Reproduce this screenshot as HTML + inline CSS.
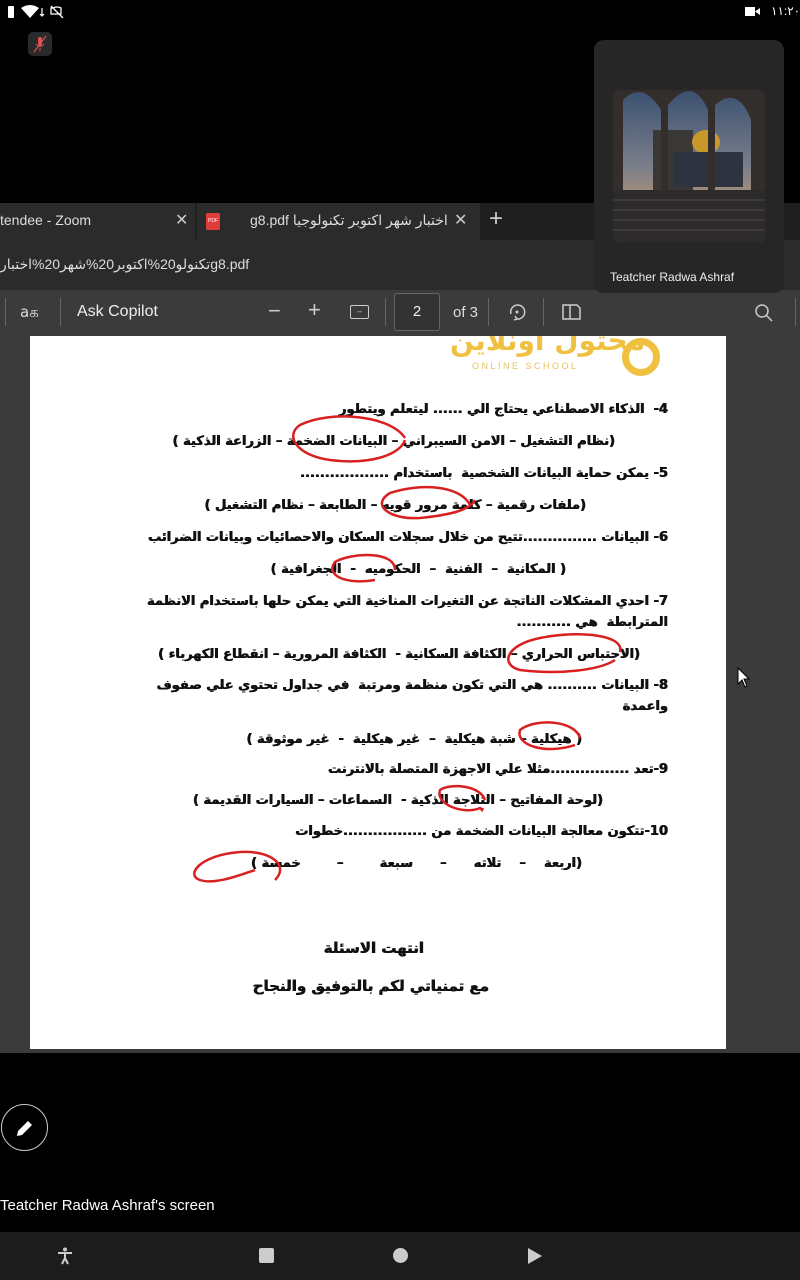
<!DOCTYPE html>
<html><head><meta charset="utf-8"><style>
*{margin:0;padding:0;box-sizing:border-box}
body{width:800px;height:1280px;background:#000;position:relative;overflow:hidden;font-family:"Liberation Sans",sans-serif;color:#ddd}
.a{position:absolute}
.ar{position:absolute;direction:rtl;white-space:nowrap;font-family:"DejaVu Sans","Liberation Sans",sans-serif;font-weight:bold;font-size:13px;color:#111;line-height:20px;text-shadow:0.4px 0 0 #111,-0.3px 0 0 #111}
</style></head><body>
<!-- status bar -->
<div class="a" style="left:8px;top:6px;width:6px;height:12px;background:#fff;border-radius:1px"></div>
<svg class="a" style="left:20px;top:5px" width="48" height="14"><path d="M1 3 Q10 -3 19 3 L10 13 Z" fill="#fff"/><path d="M22 3v8M20 9l2 2 2-2" stroke="#fff" stroke-width="1.2" fill="none"/><path d="M33 3 Q37 1 41 3 V9 H31 V3 Z M31 1 L43 13" stroke="#fff" stroke-width="1.3" fill="none"/></svg>
<div class="a" style="left:745px;top:7px;width:10px;height:9px;background:#fff"></div>
<div class="a" style="left:755px;top:8px;width:5px;height:7px;background:#fff;clip-path:polygon(0 50%,100% 0,100% 100%)"></div>
<div class="a" style="left:771px;top:4px;font-size:12px;color:#fff">١١:٢٠</div>
<div class="a" style="left:28px;top:32px;width:24px;height:24px;background:#2a2a2a;border-radius:5px"></div>
<svg class="a" style="left:28px;top:32px" width="24" height="24"><rect x="10" y="5" width="4" height="9" rx="2" fill="#e05050"/><path d="M8 12 q4 5 8 0 M12 16v3" stroke="#e05050" fill="none"/><path d="M6 20 L18 4" stroke="#e05050" stroke-width="1.2"/></svg>

<!-- browser -->
<div class="a" style="left:0;top:203px;width:800px;height:37px;background:#1f1f1f"></div>
<div class="a" style="left:0;top:203px;width:195px;height:37px;background:#2b2b2b"></div>
<div class="a" style="left:0;top:212px;font-size:14px;color:#ddd">tendee - Zoom</div>
<div class="a" style="left:175px;top:210px;font-size:16px;color:#ccc">✕</div>
<div class="a" style="left:197px;top:203px;width:283px;height:37px;background:#2b2b2b"></div>
<div class="a" style="left:206px;top:213px;width:14px;height:17px;background:#e03c3c;border-radius:2px;font-size:5px;color:#fff;text-align:center;line-height:17px">PDF</div>
<div class="a" style="left:250px;top:212px;font-size:14px;color:#ddd;font-family:'Liberation Sans','DejaVu Sans',sans-serif">g8.pdf اختبار شهر اكتوبر تكنولوجيا</div>
<div class="a" style="left:454px;top:210px;font-size:16px;color:#ccc">✕</div>
<div class="a" style="left:489px;top:205px;font-size:24px;color:#ccc;font-weight:300">+</div>
<div class="a" style="left:0;top:240px;width:800px;height:50px;background:#2b2b2b"></div>
<div class="a" style="left:0;top:256px;font-size:14px;color:#ddd;font-family:'Liberation Sans','DejaVu Sans',sans-serif">تكنولو20%اكتوبر20%شهر20%اختبارg8.pdf</div>
<div class="a" style="left:0;top:290px;width:800px;height:46px;background:#3b3b3b"></div>
<div class="a" style="left:5px;top:298px;width:1px;height:28px;background:#666"></div>
<div class="a" style="left:20px;top:303px;font-size:15px;color:#ddd;font-family:'DejaVu Sans',sans-serif">aக</div>
<div class="a" style="left:60px;top:298px;width:1px;height:28px;background:#666"></div>
<div class="a" style="left:77px;top:303px;font-size:16px;color:#eee">Ask Copilot</div>
<div class="a" style="left:268px;top:298px;font-size:22px;color:#ccc">−</div>
<div class="a" style="left:308px;top:297px;font-size:22px;color:#ccc">+</div>
<div class="a" style="left:350px;top:305px;width:19px;height:14px;border:1.5px solid #ccc;border-radius:2px;font-size:7px;text-align:center;line-height:11px">↔</div>
<div class="a" style="left:385px;top:298px;width:1px;height:28px;background:#666"></div>
<div class="a" style="left:394px;top:293px;width:46px;height:38px;border:1px solid #666;background:#333;border-radius:3px;text-align:center;line-height:36px;font-size:15px;color:#eee">2</div>
<div class="a" style="left:453px;top:304px;font-size:15px;color:#ddd">of 3</div>
<div class="a" style="left:488px;top:298px;width:1px;height:28px;background:#666"></div>
<svg class="a" style="left:507px;top:302px" width="20" height="20"><path d="M4 12 A7 7 0 1 1 10 17" stroke="#ccc" stroke-width="1.5" fill="none"/><circle cx="10" cy="10" r="1.5" fill="#ccc"/><path d="M8 14l2 3-3 1" stroke="#ccc" fill="none" stroke-width="1.5"/></svg>
<div class="a" style="left:543px;top:298px;width:1px;height:28px;background:#666"></div>
<svg class="a" style="left:561px;top:303px" width="20" height="18"><path d="M2 2h14l3 3v11H2z M9 2v14" stroke="#ccc" stroke-width="1.5" fill="none"/></svg>
<svg class="a" style="left:754px;top:303px" width="20" height="20"><circle cx="8" cy="8" r="6" stroke="#ccc" stroke-width="1.5" fill="none"/><path d="M12.5 12.5L18 18" stroke="#ccc" stroke-width="1.5"/></svg>
<div class="a" style="left:795px;top:298px;width:1px;height:28px;background:#666"></div>
<div class="a" style="left:0;top:336px;width:800px;height:717px;background:#3b3b3b"></div>

<!-- page -->
<div class="a" style="left:30px;top:336px;width:696px;height:713px;background:#fff;overflow:hidden">
<div class="a" style="left:420px;top:-12px;font-size:28px;font-weight:bold;color:#f0c040;font-family:'DejaVu Sans',sans-serif;direction:rtl">محتول اونلاين</div>
<div class="a" style="left:442px;top:25px;font-size:9px;letter-spacing:2.5px;color:#e8c060">ONLINE SCHOOL</div>
<div class="a" style="left:592px;top:2px;width:38px;height:38px;border:7px solid #f0c040;border-radius:50%"></div>
</div>

<div class="ar" style="right:132px;top:400px">4-&nbsp; الذكاء الاصطناعي يحتاج الي ...... ليتعلم ويتطور</div>
<div class="ar" style="right:185px;top:432px">(نظام التشغيل – الامن السيبراني – البيانات الضخمة – الزراعة الذكية )</div>
<div class="ar" style="right:132px;top:464px">5- يمكن حماية البيانات الشخصية&nbsp; باستخدام ..................</div>
<div class="ar" style="right:214px;top:496px">(ملفات رقمية – كلمة مرور قويه – الطابعة – نظام التشغيل )</div>
<div class="ar" style="right:132px;top:528px">6- البيانات ...............تتيح من خلال سجلات السكان والاحصائيات وبيانات الضرائب</div>
<div class="ar" style="right:234px;top:560px">( المكانية&nbsp; –&nbsp; الفنية&nbsp; –&nbsp; الحكوميه&nbsp; -&nbsp; الجغرافية )</div>
<div class="ar" style="right:132px;top:592px">7- احدي المشكلات الناتجة عن التغيرات المناخية التي يمكن حلها باستخدام الانظمة</div>
<div class="ar" style="right:132px;top:613px">المترابطة&nbsp; هي ...........</div>
<div class="ar" style="right:160px;top:645px">(الاحتباس الحراري – الكثافة السكانية -&nbsp; الكثافة المرورية – انقطاع الكهرباء )</div>
<div class="ar" style="right:132px;top:676px">8- البيانات .......... هي التي تكون منظمة ومرتبة&nbsp; في جداول تحتوي علي صفوف</div>
<div class="ar" style="right:132px;top:697px">واعمدة</div>
<div class="ar" style="right:218px;top:730px">( هيكلية – شبة هيكلية&nbsp; –&nbsp; غير هيكلية&nbsp; -&nbsp; غير موثوقة )</div>
<div class="ar" style="right:132px;top:760px">9-تعد ................مثلا علي الاجهزة المتصلة بالانترنت</div>
<div class="ar" style="right:197px;top:791px">(لوحة المفاتيح – الثلاجة الذكية -&nbsp; السماعات – السيارات القديمة )</div>
<div class="ar" style="right:132px;top:822px">10-تتكون معالجة البيانات الضخمة من .................خطوات</div>
<div class="ar" style="right:218px;top:854px">(اربعة&nbsp; &nbsp; –&nbsp; &nbsp; تلاته&nbsp; &nbsp; &nbsp; –&nbsp; &nbsp; &nbsp; سبعة&nbsp; &nbsp; &nbsp; &nbsp; –&nbsp; &nbsp; &nbsp; &nbsp; خمسة )</div>
<div class="ar" style="right:376px;top:938px;font-size:15px">انتهت الاسئلة</div>
<div class="ar" style="right:311px;top:976px;font-size:15px">مع تمنياتي لكم بالتوفيق والنجاح</div>

<svg class="a" style="left:0;top:0" width="800" height="1280" fill="none" stroke="#d82020" stroke-width="2.5">
<path d="M405 438 C390 415 330 410 300 425 C285 435 295 455 330 460 C370 465 400 455 405 440"/>
<path d="M470 505 C460 485 420 483 390 493 C370 505 390 520 420 518 C450 515 470 510 475 500"/>
<path d="M395 570 C395 550 350 553 335 562 C325 575 345 585 375 580"/>
<path d="M620 652 C625 635 580 630 540 638 C505 645 500 665 520 670 C560 675 600 670 615 660"/>
<path d="M580 738 C575 720 535 718 520 730 C515 745 545 755 575 745"/>
<path d="M485 800 C480 785 450 783 440 790 C435 805 465 815 480 808 L482 810 L483 808"/>
<path d="M275 880 C290 865 270 850 240 852 C200 855 185 875 200 880 C215 885 240 875 255 870"/>
</svg>

<!-- video tile -->
<div class="a" style="left:594px;top:40px;width:190px;height:253px;background:#262626;border-radius:10px"></div>
<svg class="a" style="left:613px;top:90px" width="152" height="152">
<defs><linearGradient id="sk" x1="0" y1="0" x2="0" y2="1"><stop offset="0" stop-color="#3a5070"/><stop offset="0.5" stop-color="#7a7e8a"/><stop offset="0.85" stop-color="#c89a70"/></linearGradient><clipPath id="c"><rect width="152" height="152" rx="8"/></clipPath></defs>
<g clip-path="url(#c)">
<rect width="152" height="152" fill="url(#sk)"/>
<rect x="40" y="40" width="40" height="60" fill="#3a3836"/>
<ellipse cx="93" cy="52" rx="14" ry="12" fill="#c8982a"/>
<rect x="60" y="62" width="70" height="35" fill="#2e3340"/>
<path d="M0 0 H152 V150 H138 V30 Q125 -5 102 15 V100 H95 V20 Q80 -15 55 15 V100 H48 V20 Q30 -10 10 10 V150 H0Z" fill="#332e2c"/>
<rect x="0" y="100" width="152" height="52" fill="#2c2a2a"/>
<path d="M0 110H152M0 120H152M0 130H152M0 140H152" stroke="#3e3a38" stroke-width="2"/>
</g></svg>
<div class="a" style="left:610px;top:270px;font-size:12px;color:#eee">Teatcher Radwa Ashraf</div>

<!-- cursor -->
<svg class="a" style="left:737px;top:667px" width="14" height="22"><path d="M1 1 V17 L5 13 L8 20 L10 19 L7 12 H12 Z" fill="#fff" stroke="#000"/></svg>

<!-- bottom -->
<div class="a" style="left:1px;top:1104px;width:47px;height:47px;border:1.5px solid #ccc;border-radius:50%;background:#000"></div>
<svg class="a" style="left:14px;top:1117px" width="22" height="22"><path d="M3 19 L4 14 L14 4 L18 8 L8 18 Z" fill="#fff"/></svg>
<div class="a" style="left:0;top:1197px;font-size:15px;color:#fff">Teatcher Radwa Ashraf's screen</div>
<div class="a" style="left:0;top:1232px;width:800px;height:48px;background:#1c1c1c"></div>
<svg class="a" style="left:56px;top:1247px" width="18" height="18"><circle cx="9" cy="2.5" r="2" fill="#ccc"/><path d="M2 6H16M9 6V11M9 11L6 17M9 11L12 17" stroke="#ccc" stroke-width="2"/></svg>
<div class="a" style="left:259px;top:1248px;width:15px;height:15px;background:#ccc;border-radius:2px"></div>
<div class="a" style="left:393px;top:1248px;width:15px;height:15px;background:#ccc;border-radius:50%"></div>
<svg class="a" style="left:527px;top:1247px" width="16" height="18"><path d="M1 1 L15 9 L1 17Z" fill="#ccc"/></svg>
</body></html>
